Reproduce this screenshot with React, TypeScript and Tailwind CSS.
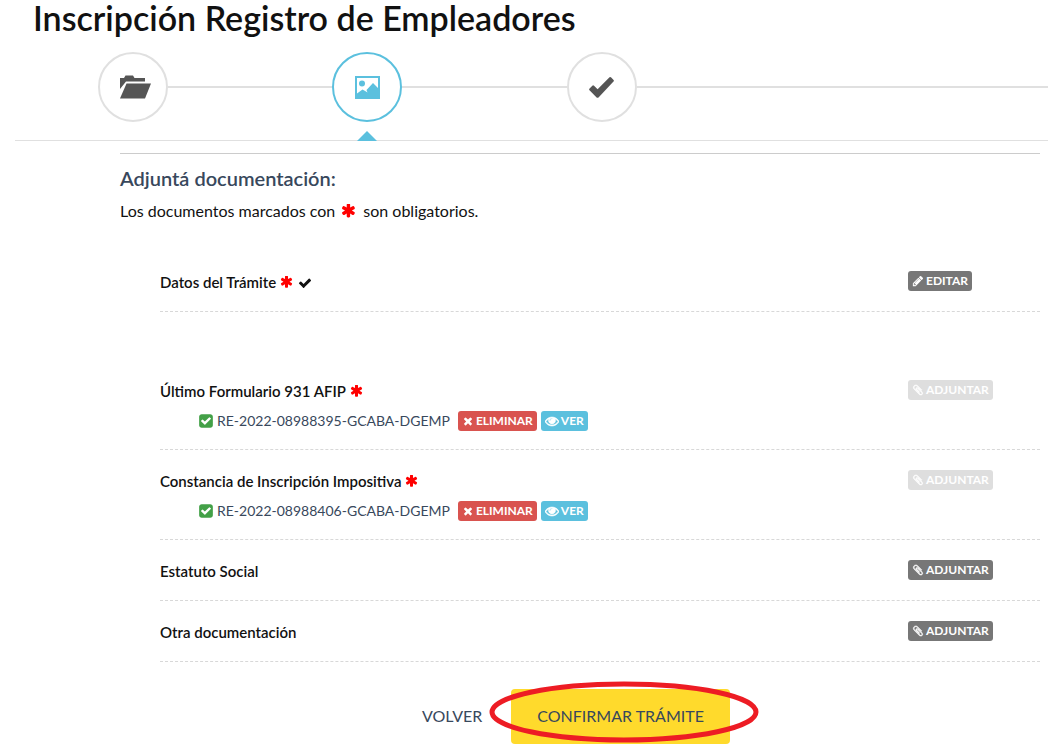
import type { ReactNode } from "react";

const PATHS = {
  asterisk:
    "M1482 886q46 26 59.5 77.5t-12.5 97.5l-64 110q-26 46-77.5 59.5t-97.5-12.5l-266-153v307q0 52-38 90t-90 38h-128q-52 0-90-38t-38-90v-307l-266 153q-46 26-97.5 12.5t-77.5-59.5l-64-110q-26-46-12.5-97.5t59.5-77.5l266-154-266-154q-46-26-59.5-77.5t12.5-97.5l64-110q26-46 77.5-59.5t97.5 12.5l266 153v-307q0-52 38-90t90-38h128q52 0 90 38t38 90v307l266-153q46-26 97.5-12.5t77.5 59.5l64 110q26 46 12.5 97.5t-59.5 77.5l-266 154z",
  check:
    "M1671 566q0 40-28 68l-724 724-136 136q-28 28-68 28t-68-28l-136-136-362-362q-28-28-28-68t28-68l136-136q28-28 68-28t68 28l294 295 656-657q28-28 68-28t68 28l136 136q28 28 28 68z",
  times:
    "M1490 1322q0 40-28 68l-136 136q-28 28-68 28t-68-28l-294-294-294 294q-28 28-68 28t-68-28l-136-136q-28-28-28-68t28-68l294-294-294-294q-28-28-28-68t28-68l136-136q28-28 68-28t68 28l294 294 294-294q28-28 68-28t68 28l136 136q28 28 28 68t-28 68l-294 294 294 294q28 28 28 68z",
  pencil:
    "M491 1536l91-91-235-235-91 91v107h128v128h107zm523-928q0-22-22-22-10 0-17 7l-542 542q-7 7-7 17 0 22 22 22 10 0 17-7l542-542q7-7 7-17zm-54-192l416 416-832 832h-416v-416zm683 96q0 53-37 90l-166 166-416-416 166-165q36-38 90-38 53 0 91 38l235 234q37 39 37 91z",
  checkSquare:
    "M813 1299l614-614q19-19 19-45t-19-45l-102-102q-19-19-45-19t-45 19l-467 467-211-211q-19-19-45-19t-45 19l-102 102q-19 19-19 45t19 45l358 358q19 19 45 19t45-19zm851-883v960q0 119-84.5 203.5t-203.5 84.5h-960q-119 0-203.5-84.5t-84.5-203.5v-960q0-119 84.5-203.5t203.5-84.5h960q119 0 203.5 84.5t84.5 203.5z",
  eye: "M1664 960q-152-236-381-353 61 104 61 225 0 185-131.5 316.5t-316.5 131.5-316.5-131.5-131.5-316.5q0-121 61-225-229 117-381 353 133 205 333.5 326.5t434.5 121.5 434.5-121.5 333.5-326.5zm-720-384q0-20-14-34t-34-14q-125 0-214.5 89.5t-89.5 214.5q0 20 14 34t34 14 34-14 14-34q0-86 61-147t147-61q20 0 34-14t14-34zm848 384q0 34-20 69-140 230-376.5 368.5t-499.5 138.5-499.5-139-376.5-368q-20-35-20-69t20-69q140-229 376.5-368t499.5-139 499.5 139 376.5 368q20 35 20 69z",
  paperclip:
    "M1596 1385q0 117-79 196t-196 79q-135 0-235-100l-777-776q-113-115-113-271 0-159 110-270t269-111q158 0 273 113l605 606q10 10 10 22 0 16-30.5 46.5t-46.5 30.5q-13 0-23-10l-606-607q-79-77-181-77-106 0-179 75t-73 181q0 105 76 181l776 777q63 63 145 63 64 0 106-42t42-106q0-82-63-145l-581-581q-26-24-60-24-29 0-48 19t-19 48q0 32 25 59l410 410q10 10 10 22 0 16-31 47t-47 31q-12 0-22-10l-410-410q-63-61-63-149 0-82 57-139t139-57q88 0 149 63l581 581q100 98 100 235z",
};

function Icon({
  name,
  className,
}: {
  name: keyof typeof PATHS;
  className: string;
}) {
  return (
    <svg
      viewBox="0 0 1792 1792"
      fill="currentColor"
      aria-hidden="true"
      className={`shrink-0 ${className}`}
    >
      <path d={PATHS[name]} />
    </svg>
  );
}

type Doc = {
  title: string;
  required?: boolean;
  done?: boolean;
  file?: string;
  action: "EDITAR" | "ADJUNTAR";
};

const first: Doc = {
  title: "Datos del Trámite",
  required: true,
  done: true,
  action: "EDITAR",
};

const docs: Doc[] = [
  {
    title: "Último Formulario 931 AFIP",
    required: true,
    file: "RE-2022-08988395-GCABA-DGEMP",
    action: "ADJUNTAR",
  },
  {
    title: "Constancia de Inscripción Impositiva",
    required: true,
    file: "RE-2022-08988406-GCABA-DGEMP",
    action: "ADJUNTAR",
  },
  { title: "Estatuto Social", action: "ADJUNTAR" },
  { title: "Otra documentación", action: "ADJUNTAR" },
];

// the eye and the paperclip are thin glyphs, so they are drawn a bit heavier
const TAG_ICON = {
  times: "size-3",
  pencil: "size-3",
  eye: "size-[14px] stroke-current stroke-[70]",
  paperclip: "size-3 stroke-current stroke-[70]",
};

function Tag({
  icon,
  className,
  disabled,
  children,
}: {
  icon: keyof typeof TAG_ICON;
  className: string;
  disabled?: boolean;
  children: ReactNode;
}) {
  return (
    <button
      type="button"
      disabled={disabled}
      className={`flex h-5 items-center gap-[2px] rounded-[3px] px-1 text-xs leading-5 font-bold text-white ${className}`}
    >
      <Icon name={icon} className={TAG_ICON[icon]} />
      {children}
    </button>
  );
}

function DocRow({ doc }: { doc: Doc }) {
  return (
    <li className="grid grid-cols-[85%_15%] items-start border-b border-dashed border-[#d8d8d8] pt-5 pb-[18px]">
      <div>
        <h3 className="flex items-center gap-1 text-[15px] leading-[22px] font-semibold text-[#111]">
          {doc.title}
          {doc.required && (
            <Icon name="asterisk" className="mt-0.5 size-[14px] text-[#ff0000]" />
          )}
          {doc.done && <Icon name="check" className="mt-0.5 size-[14px]" />}
        </h3>
        {doc.file && (
          <div className="mt-[9px] flex h-5 gap-1 pl-[38px]">
            <span className="mr-1 flex items-center gap-[3px] text-sm leading-5 text-[#38485c]">
              <Icon name="checkSquare" className="size-4 text-[#43a047]" />
              {doc.file}
            </span>
            <Tag icon="times" className="bg-[#d9534f]">
              ELIMINAR
            </Tag>
            <Tag icon="eye" className="bg-[#5bc0de]">
              VER
            </Tag>
          </div>
        )}
      </div>
      <div className="flex">
        <Tag
          icon={doc.action === "EDITAR" ? "pencil" : "paperclip"}
          disabled={!!doc.file}
          className={doc.file ? "bg-[#dedede]" : "bg-[#777]"}
        >
          {doc.action}
        </Tag>
      </div>
    </li>
  );
}

function Step({
  label,
  active,
  children,
}: {
  label: string;
  active?: boolean;
  children: ReactNode;
}) {
  return (
    <button
      type="button"
      aria-label={label}
      aria-current={active ? "step" : undefined}
      className={`relative flex size-[70px] shrink-0 items-center justify-center rounded-full border-2 bg-white ${
        active
          ? "border-[#5bc0de] text-[#5bc0de]"
          : "border-[#e0e0e0] text-[#555]"
      }`}
    >
      {children}
      {active && (
        <span className="absolute top-[77px] left-1/2 -translate-x-1/2 border-x-10 border-b-10 border-x-transparent border-b-[#5bc0de]" />
      )}
    </button>
  );
}

function Stepper() {
  return (
    <nav className="ml-[15px] flex items-center border-b border-[#e0e0e0] pb-[18px] pl-[83px]">
      <Step label="Datos">
        <svg viewBox="-4 0 36 24" fill="currentColor" className="h-6 w-9">
          <path d="M1 14V3h4l1.500-2.500h7.500L15.500 3H26v3.500H7z" />
          <path d="M7.500 8.500H32L26 23.500H1z" />
        </svg>
      </Step>
      <span className="h-[2px] flex-[2] bg-[#e0e0e0]" />
      <Step label="Documentación" active>
        <svg viewBox="0 0 25 23" fill="currentColor" className="h-[23px] w-[25px]">
          <path
            fillRule="evenodd"
            d="M0 0h25v23H0zM2 2v15.500l5.500-4 3.500 2 1.500 1-1-2.500 6.500-7 5 5V2z"
          />
          <circle cx="7" cy="7.500" r="3" />
        </svg>
      </Step>
      <span className="h-[2px] flex-[2] bg-[#e0e0e0]" />
      <Step label="Confirmación">
        <svg viewBox="0 0 25 21" fill="currentColor" className="h-[21px] w-[25px]">
          <path d="M20.500 0.300Q21.500-0.300 22.200 0.500L24.600 3Q25.200 3.800 24.500 4.600L9.500 20.400Q8.500 21.300 7.600 20.400L0.500 13.300Q-0.300 12.400 0.600 11.500L3.300 8.700Q4.200 8 5 8.700L8.600 12.200z" />
        </svg>
      </Step>
      <span className="h-[2px] flex-[5] bg-[#e0e0e0]" />
    </nav>
  );
}

export default function App() {
  return (
    <div className="bg-white font-['Lato',sans-serif] text-[#111]">
      <h1 className="pb-4 pl-[33px] text-[34px] leading-9 font-semibold">
        Inscripción Registro de Empleadores
      </h1>
      <Stepper />
      <main className="mt-3 mr-2 ml-[120px] border-t border-[#ccc] pt-3">
        <h2 className="text-xl leading-6 font-semibold text-[#38485c]">
          Adjuntá documentación:
        </h2>
        <p className="mt-[9px] flex items-center gap-1.5 text-base leading-6">
          Los documentos marcados con
          <Icon name="asterisk" className="mt-0.5 size-4 text-[#ff0000]" />
          son obligatorios.
        </p>
        <ul className="mt-7 ml-10">
          <DocRow doc={first} />
        </ul>
        <ul className="mt-12 ml-10">
          {docs.map((doc) => (
            <DocRow key={doc.title} doc={doc} />
          ))}
        </ul>
        <div className="mt-[27px] flex items-center justify-center gap-[29px] pr-2 text-base leading-6 text-[#38485c]">
          <button type="button" className="pb-0.5">
            VOLVER
          </button>
          <button
            type="button"
            className="relative h-[55px] rounded bg-[#ffda2c] px-[26px] pb-0.5"
          >
            CONFIRMAR TRÁMITE
            <svg
              viewBox="0 0 270 62"
              className="pointer-events-none absolute -top-2 -left-[22px] h-[62px] w-[270px] max-w-none"
            >
              <ellipse
                cx="135"
                cy="31"
                rx="132"
                ry="28"
                fill="none"
                stroke="#ed1c24"
                strokeWidth="5"
              />
            </svg>
          </button>
        </div>
      </main>
    </div>
  );
}
